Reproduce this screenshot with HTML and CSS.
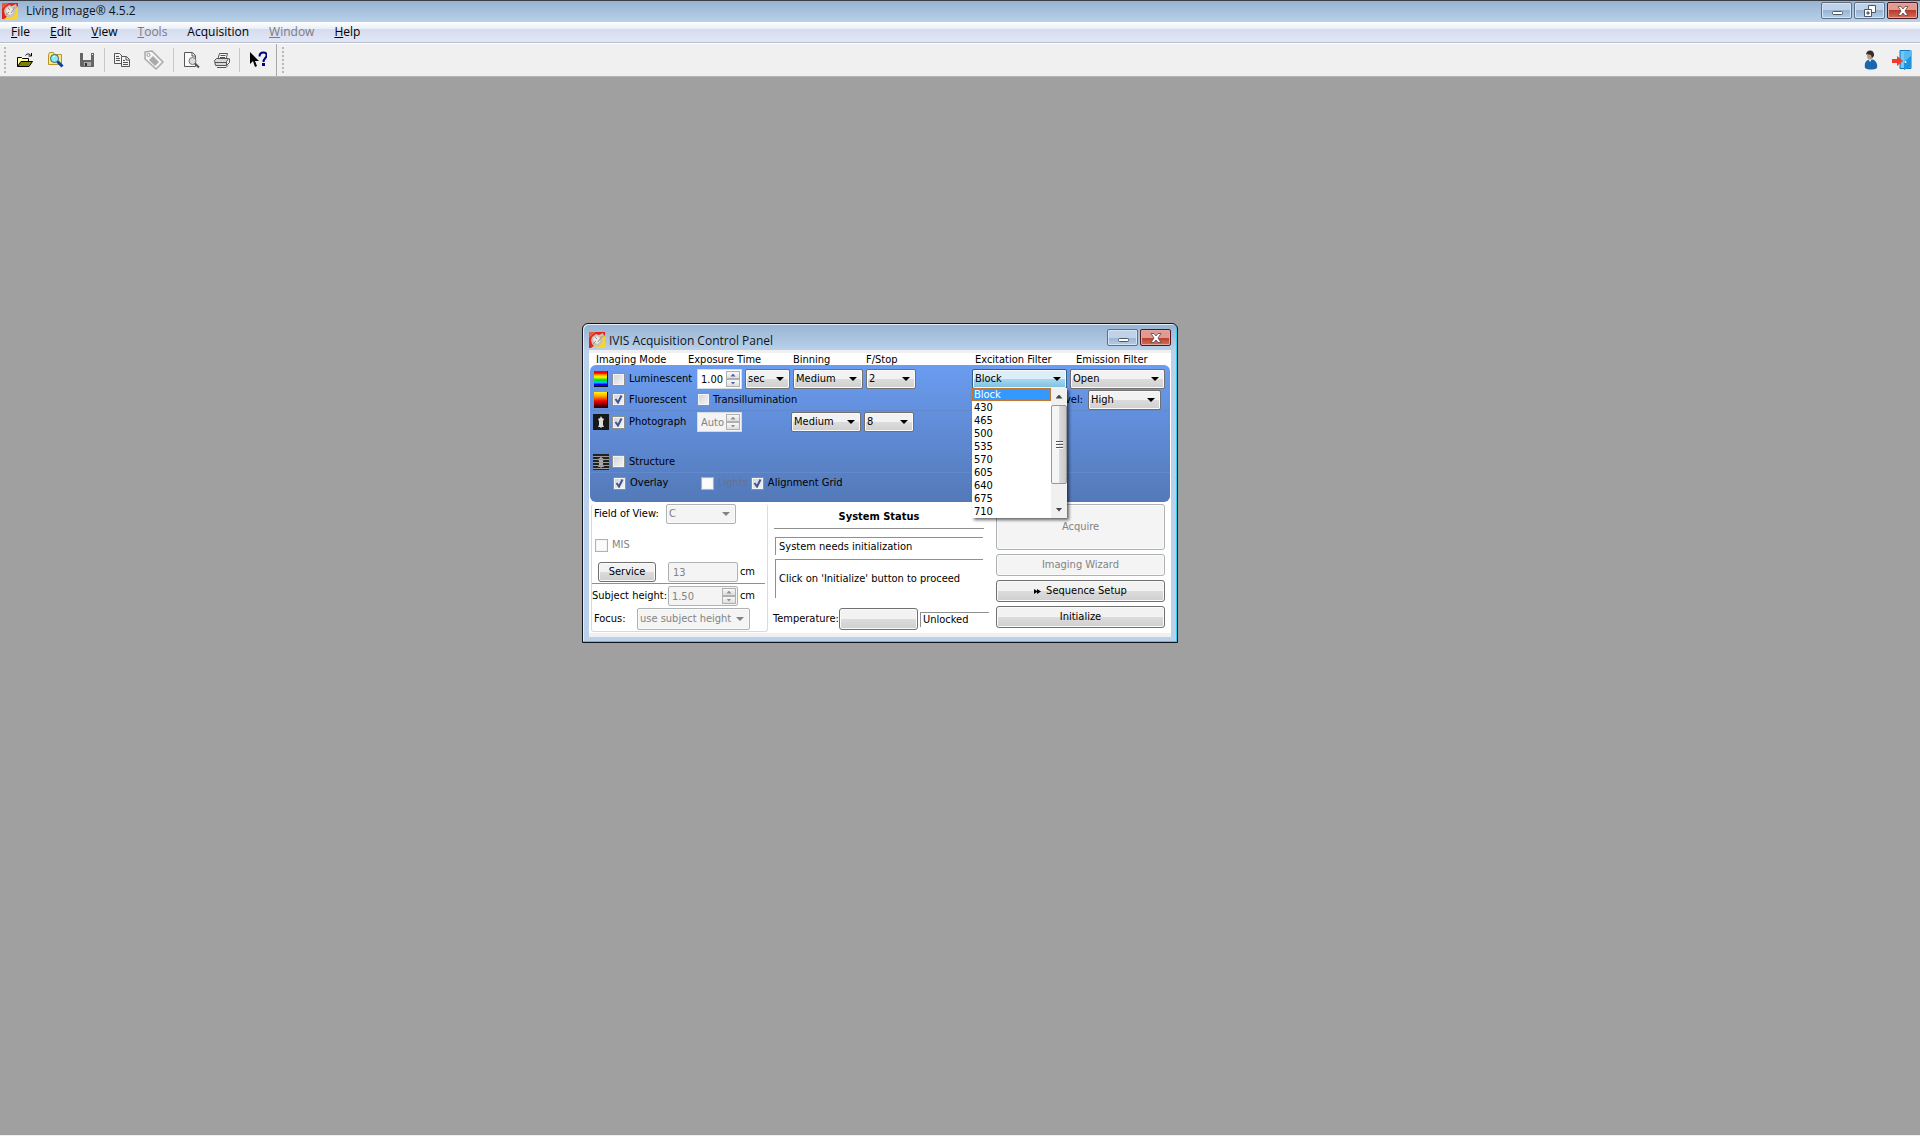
FILE: index.html
```
<!DOCTYPE html>
<html lang="en">
<head>
  <meta charset="UTF-8">
  <meta name="viewport" content="width=device-width, initial-scale=1">
  <title>Living Image® 4.5.2</title>
  <link rel="stylesheet" href="styles.css">
</head>
<body>
  <!-- shared logo -->
  <svg width="0" height="0" class="defs" aria-hidden="true">
    <symbol id="logo" viewBox="0 0 16 16">
      <rect width="16" height="16" fill="#e0241c"/>
      <path d="M16 3v13H2l8-6z" fill="#f7d52a"/>
      <path d="M0 0h7L0 6z" fill="#e85a3c"/>
      <path d="M2 8l1-3 4-3 3 1 4-2 1 3-2 3 1 3-4 4-4 1-3-3z" fill="#c9c2bb"/>
      <path d="M4 6l4-2 3 2v4l-3 2-3-2z" fill="#ebe8e3"/>
      <path d="M4 12l3-3M9 10l4-6M6 5l2 2" stroke="#9a8f88" fill="none"/>
    </symbol>
  </svg>

  <header class="titlebar">
    <svg class="logo"><use href="#logo"/></svg>
    <h1>Living Image® 4.5.2</h1>
    <div class="win-buttons">
      <button aria-label="Minimize"><svg width="12" height="12"><rect x="1.5" y="6.5" width="10" height="3" rx="1" fill="#fff" stroke="#4d5666"/></svg></button>
      <button aria-label="Restore"><svg width="12" height="12" fill="#fff" stroke="#4d5666"><path d="M4.500 .5h7v7h-7z"/><path d="M.5 4.500h7v7h-7z"/><path d="M3 7h2v2H3z" fill="#8fb0d4"/></svg></button>
      <button class="close" aria-label="Close"><svg width="12" height="12"><path d="M1 1.500h3l2 2.500 2-2.500h3L8 6l3 4.500H8L6 8l-2 2.500H1L4 6z" fill="#fff" stroke="#57444d" stroke-width=".8"/></svg></button>
    </div>
  </header>

  <nav class="menubar">
    <button><u>F</u>ile</button>
    <button><u>E</u>dit</button>
    <button><u>V</u>iew</button>
    <button disabled><u>T</u>ools</button>
    <button>Acquisition</button>
    <button disabled><u>W</u>indow</button>
    <button><u>H</u>elp</button>
  </nav>

  <div class="toolbar">
    <span class="grip"></span>
    <button aria-label="Open">
      <svg width="18" height="18" viewBox="0 0 18 18"><path d="M1.500 15.500v-9h4l1 1h6v3" fill="#ffff9c" stroke="#000"/><path d="M1.500 15.500l3.500-5h11.500l-3.500 5z" fill="#808000" stroke="#000"/><path d="M9.500 4.500c1-2 4-2 5.500 0M15.500 2v3h-3" fill="none" stroke="#000"/></svg>
    </button>
    <button aria-label="Browse">
      <svg width="18" height="18" viewBox="0 0 18 18"><path d="M1.500 13.500v-10l1-2h4l1 2h7v10z" fill="#ffe680" stroke="#b8962a"/><circle cx="7.500" cy="7.500" r="4" fill="#8ceaf5" stroke="#35607c"/><path d="M6 6l2-1" stroke="#fff"/><path d="M10.500 10.500l5 5" stroke="#0a3fb0" stroke-width="3"/></svg>
    </button>
    <button aria-label="Save">
      <svg width="18" height="18" viewBox="0 0 18 18"><path d="M2 2h14v14H3l-1-1z" fill="#666"/><path d="M5 2h8v7H5z" fill="#f0f0f0"/><path d="M6 11h7v4H6z" fill="#aaa"/><path d="M7 12h2v3H7z" fill="#333"/><path d="M14 3h1v1h-1z" fill="#eee"/></svg>
    </button>
    <i class="sep"></i>
    <button aria-label="Copy">
      <svg width="18" height="18" viewBox="0 0 18 18" fill="#f4f4f4" stroke="#555"><path d="M1.500 2.500h5l3 3v7h-8z"/><path d="M3 5.500h3M3 7.500h4M3 9.500h4"/><path d="M8.500 5.500h5l3 3v7h-8z"/><path d="M13 6v3h3M10 9.500h2M10 11.500h5M10 13.500h5"/></svg>
    </button>
    <button class="wide" aria-label="Label">
      <svg width="20" height="20" viewBox="0 0 20 20"><path d="M1 2l7-1 11 11-7 7L1 9z" fill="#f4f4f4" stroke="#aaa" stroke-width="1.500" stroke-linejoin="round"/><circle cx="4.500" cy="5" r="1.500" fill="#fff" stroke="#999"/><path d="M9 6l6 6-4 4-6-6z" fill="#aaa"/></svg>
    </button>
    <i class="sep"></i>
    <button aria-label="Print preview">
      <svg width="18" height="18" viewBox="0 0 18 18"><path d="M2.500 1.500h8l3 3v11h-11z" fill="#fafafa" stroke="#555"/><path d="M10 2v3h3" fill="none" stroke="#555"/><circle cx="10.500" cy="10" r="3.500" fill="#ddd" stroke="#777"/><path d="M13 12.500l4 4" stroke="#555" stroke-width="2"/></svg>
    </button>
    <button aria-label="Print">
      <svg width="18" height="18" viewBox="0 0 18 18" stroke="#555"><path d="M4.500 9.500l2-7h8l-2 7" fill="#fafafa"/><path d="M7.500 4.500h5M7 6.500h5"/><path d="M1.500 9.500l2-2h12l-2 3v4h-11z" fill="#d8d8d8"/><path d="M13.500 14.500l3-3v-4M2 11.500h11" fill="none"/><path d="M4 16.500h9l2-2" fill="none"/></svg>
    </button>
    <i class="sep"></i>
    <button class="wide" aria-label="What's this?">
      <svg width="18" height="18" viewBox="0 0 18 18"><path d="M1 1v12l3-3 2 6 2-1-2-5h4z" fill="#000"/><path d="M10.500 5.500c0-3 2-4 4-4s3.500 1 3 3.500-3 2.500-3 6" fill="none" stroke="#000080" stroke-width="2"/><path d="M13 12h3v3h-3z" fill="#000080"/></svg>
    </button>
    <i class="edge"></i>
    <span class="grip"></span>
    <div class="toolbar-right">
      <button aria-label="User">
        <svg width="16" height="20" viewBox="0 0 16 20"><path d="M2 18c-1-5 1-8 5-9 5 0 8 4 7 9-3 2-9 2-12 0z" fill="#1b66ac"/><path d="M5 9l2 3 2-3z" fill="#d8ecf8"/><ellipse cx="7" cy="5.500" rx="3" ry="4" fill="#b59a80"/><path d="M3 5c0-6 9-6 8 1l-2 2-1-3-4-1z" fill="#382d26"/></svg>
      </button>
      <button aria-label="Log out">
        <svg width="20" height="20" viewBox="0 0 20 20"><path d="M8 .5h11v18H8z" fill="#73c7f2" stroke="#1472b8"/><path d="M12 3l7-3v17l-7 3z" fill="#1f93dc"/><path d="M12 3l7-3v6l-7 6z" fill="#55baf0"/><circle cx="13.500" cy="12" r="1" fill="#fff"/><path d="M0 9h5V6l6 5-6 5v-3H0z" fill="#ef3b2d"/></svg>
      </button>
    </div>
  </div>

  <main class="desktop">
    <section class="window">
      <header class="window-title">
        <svg class="logo"><use href="#logo"/></svg>
        <h2>IVIS Acquisition Control Panel</h2>
        <div class="win-buttons">
          <button aria-label="Minimize"><svg width="12" height="12"><rect x="1.500" y="6.500" width="10" height="3" rx="1" fill="#fff" stroke="#4d5666"/></svg></button>
          <button class="close" aria-label="Close"><svg width="12" height="12"><path d="M1 1.500h3l2 2.500 2-2.500h3L8 6l3 4.500H8L6 8l-2 2.500H1L4 6z" fill="#fff" stroke="#57444d" stroke-width=".8"/></svg></button>
        </div>
      </header>

      <div class="client">
        <div class="row heads">
          <span>Imaging Mode</span>
          <span>Exposure Time</span>
          <span>Binning</span>
          <span>F/Stop</span>
          <span>Excitation Filter</span>
          <span>Emission Filter</span>
        </div>

        <div class="imaging">
          <div class="row">
            <div class="mode">
              <i class="mode-icon rainbow"></i>
              <label><input type="checkbox">Luminescent</label>
            </div>
            <div class="cell">
              <div class="spinner">
                <input type="text" value="1.00" aria-label="Exposure time">
                <div class="steps"><button aria-label="Up"></button><button aria-label="Down"></button></div>
              </div>
              <select class="unit" aria-label="Unit"><option>sec</option></select>
            </div>
            <select class="binning" aria-label="Binning"><option>Medium</option></select>
            <select class="fstop" aria-label="F/Stop"><option>2</option></select>
            <div class="combo">
              <select class="open" aria-label="Excitation filter"><option>Block</option></select>
              <div class="dropdown">
                <ul role="listbox">
                  <li role="option" aria-selected="true">Block</li>
                  <li role="option">430</li>
                  <li role="option">465</li>
                  <li role="option">500</li>
                  <li role="option">535</li>
                  <li role="option">570</li>
                  <li role="option">605</li>
                  <li role="option">640</li>
                  <li role="option">675</li>
                  <li role="option">710</li>
                </ul>
                <div class="scrollbar">
                  <button aria-label="Scroll up"></button>
                  <div class="thumb"><i></i></div>
                  <button aria-label="Scroll down"></button>
                </div>
              </div>
            </div>
            <select aria-label="Emission filter"><option>Open</option></select>
          </div>

          <div class="row lined">
            <div class="mode">
              <i class="mode-icon fire"></i>
              <label><input type="checkbox" checked>Fluorescent</label>
            </div>
            <label class="cell trans"><input type="checkbox">Transillumination</label>
            <div class="lamp">
              <label for="lamp">Lamp Level:</label>
              <select id="lamp"><option>High</option></select>
            </div>
          </div>

          <div class="row photo">
            <div class="mode">
              <svg class="mode-icon" viewBox="0 0 16 16"><rect width="16" height="16" fill="#181818"/><path d="M8 2l1 2 2 1-1 2v4l1 2H9l-1 1-1-1H5l1-2V7L5 5l2-1z" fill="#ddd"/></svg>
              <label><input type="checkbox" checked>Photograph</label>
            </div>
            <div class="cell">
              <div class="spinner">
                <input type="text" value="Auto" aria-label="Photograph exposure" disabled>
                <div class="steps"><button aria-label="Up" disabled></button><button aria-label="Down" disabled></button></div>
              </div>
            </div>
            <select class="binning" aria-label="Photograph binning"><option>Medium</option></select>
            <select class="fstop" aria-label="Photograph F/Stop"><option>8</option></select>
          </div>

          <div class="row lined structure">
            <div class="mode">
              <svg class="mode-icon" viewBox="0 0 16 16"><rect width="16" height="16" fill="#222"/><path d="M8 2l1 2 2 1-1 2v4l1 2H9l-1 1-1-1H5l1-2V7L5 5l2-1z" fill="#aaa"/><path d="M0 2.500h16M0 5.500h16M0 8.500h16M0 11.500h16M0 14.500h16" stroke="#999"/></svg>
              <label><input type="checkbox">Structure</label>
            </div>
          </div>

          <div class="row overlay">
            <div class="mode indent"><label><input type="checkbox" checked>Overlay</label></div>
            <div class="cell wide-cell">
              <label class="faded"><input type="checkbox" disabled>Lights</label>
              <label><input type="checkbox" checked>Alignment Grid</label>
            </div>
          </div>
        </div>

        <div class="lower">
          <div class="stage">
            <div class="field fov">
              <label for="fov">Field of View:</label>
              <select id="fov" disabled><option>C</option></select>
            </div>
            <label class="mis"><input type="checkbox" disabled>MIS</label>
            <div class="field service">
              <button class="btn">Service</button>
              <input type="text" class="box" value="13" aria-label="Field of view width" disabled>
              <span>cm</span>
            </div>
            <hr>
            <div class="field height">
              <label for="height">Subject height:</label>
              <div class="spinner box">
                <input type="text" id="height" value="1.50" disabled>
                <div class="steps"><button aria-label="Up" disabled></button><button aria-label="Down" disabled></button></div>
              </div>
              <span>cm</span>
            </div>
            <div class="field focus">
              <label for="focus">Focus:</label>
              <select id="focus" disabled><option>use subject height</option></select>
            </div>
          </div>

          <div class="status">
            <h3>System Status</h3>
            <p class="state">System needs initialization</p>
            <p class="hint">Click on 'Initialize' button to proceed</p>
            <div class="temperature">
              <span>Temperature:</span>
              <button class="btn" aria-label="Temperature"></button>
              <span class="lock">Unlocked</span>
            </div>
          </div>

          <div class="actions">
            <button class="btn acquire" disabled>Acquire</button>
            <button class="btn" disabled>Imaging Wizard</button>
            <button class="btn"><svg width="7" height="7" viewBox="0 0 7 7"><path d="M0 1l3 2V1l4 2.500L3 6V4L0 6z"/></svg>Sequence Setup</button>
            <button class="btn">Initialize</button>
          </div>
        </div>
      </div>
    </section>
  </main>
</body>
</html>
```
FILE: styles.css
```
* {
  box-sizing: border-box;
}
body {
  margin: 0;
  min-height: 100vh;
  display: flex;
  flex-direction: column;
  font-family: "Open Sans", "Noto Sans", sans-serif;
  font-size: 12px;
  color: #000;
  background: #f0f0f0;
}
button, input, select {
  font: inherit;
  color: inherit;
  margin: 0;
}
button {
  padding: 0;
  border: 0;
  background: none;
}
h1, h2 {
  margin: 0;
  font-size: 12px;
  font-weight: normal;
  color: #10151c;
}
.defs {
  position: absolute;
}
.logo {
  width: 16px;
  height: 16px;
  flex: none;
}

/* main window chrome */
.titlebar {
  display: flex;
  align-items: center;
  gap: 8px;
  height: 22px;
  padding: 0 2px 2px;
  border-top: 1px solid #3c3f46;
  background: linear-gradient(#98b3d2, #b9d1ea);
}
.win-buttons {
  display: flex;
  gap: 2px;
  margin-left: auto;
}
.win-buttons button {
  display: flex;
  align-items: center;
  justify-content: center;
  width: 31px;
  height: 17px;
  border: 1px solid #5c7188;
  border-radius: 2px;
  box-shadow: inset 0 0 0 1px #d5e3f2;
  background: linear-gradient(#bfd2e8 50%, #98b4d3 50%, #b5cde6);
}
.win-buttons .close {
  border-color: #4c1a24;
  box-shadow: inset 0 0 0 1px #e5a79c;
  background: linear-gradient(#e09b90 50%, #b93a29 50%, #d0705a);
}
.menubar {
  display: flex;
  align-items: center;
  gap: 20px;
  height: 21px;
  padding: 0 11px 2px;
  border-bottom: 1px solid #b6bccc;
  background: linear-gradient(#fff, #e9edf7 35%, #d5dcee 36%, #e2e7f6);
}
.menubar button:disabled {
  color: #7a7a80;
}
.toolbar {
  display: flex;
  align-items: center;
  height: 34px;
  padding: 0 3px 0 4px;
  border-top: 1px solid #fff;
  border-bottom: 1px solid #b4b4b4;
  background: #f0f0f0;
}
.toolbar button {
  display: flex;
  align-items: center;
  justify-content: center;
  width: 31px;
  height: 28px;
}
.toolbar .wide {
  width: 34px;
}
.grip {
  width: 2px;
  height: 26px;
  margin-right: 3px;
  background: repeating-linear-gradient(#b8b8b8 0 2px, transparent 2px 4px);
}
.sep {
  width: 1px;
  height: 24px;
  margin: 0 1px 0 2px;
  background: #c8c8c8;
}
.edge {
  width: 1px;
  align-self: stretch;
  margin: 0 5px 0 1px;
  background: #a8a8a8;
}
.toolbar-right {
  display: flex;
  margin-left: auto;
}
.desktop {
  position: relative;
  flex: 1;
  margin-bottom: 1px;
  background: #a0a0a0;
}

/* acquisition window */
.window {
  position: absolute;
  left: 582px;
  top: 246px;
  width: 596px;
  padding: 0 6px 5px;
  border: 1px solid #10151c;
  border-radius: 6px 6px 0 0;
  box-shadow: inset -1px -1px #2ed0f0, inset 1px 1px #e4eef8;
  background: linear-gradient(#98b3d2, #b9d1ea 26px);
}
.window-title {
  display: flex;
  align-items: center;
  gap: 4px;
  height: 26px;
  padding-top: 6px;
}
.window-title .win-buttons {
  align-self: flex-start;
  margin-top: -1px;
}
.client {
  font-family: "DejaVu Sans Condensed", "DejaVu Sans", sans-serif;
  font-size: 11px;
  font-stretch: condensed;
  line-height: 14px;
  padding: 0 1px;
  border-top: 3px solid #f0f0f0;
  border-bottom: 4px solid #f0f0f0;
  background: #fff;
}
.row {
  display: grid;
  grid-template-columns: 104px 96px 73px 1fr 98px 95px;
  align-items: center;
  height: 20px;
  padding: 0 5px 0 3px;
}
.heads {
  height: 12px;
}
.heads span {
  white-space: nowrap;
}
.heads span:nth-child(1),
.heads span:nth-child(5) {
  padding-left: 3px;
}
.heads span:nth-child(2) {
  margin-left: -9px;
}
.heads span:nth-child(6) {
  padding-left: 6px;
}
.imaging {
  height: 137px;
  padding-top: 4px;
  border-radius: 6px;
  background: linear-gradient(#6b9cf0, #5379b8);
}
.lined {
  height: 22px;
  border-bottom: 1px solid #6289cb;
}
.photo {
  margin-top: 1px;
}
.photo .binning, .photo .fstop {
  margin-left: -2px;
}
.structure {
  margin-top: 19px;
}
.mode, .cell, .field, label {
  display: flex;
  align-items: center;
}
.mode {
  gap: 3px;
}
.indent {
  padding-left: 20px;
}
.mode-icon {
  width: 16px;
  height: 16px;
  flex: none;
}
.rainbow, .fire {
  width: 14px;
  margin: 0 1px;
  border: solid #111;
  border-width: 0 1px 1px 0;
}
.rainbow {
  background: linear-gradient(#f00 15%, #f90 25%, #ff0 40%, #0d0 60%, #0cf 75%, #00f 90%);
}
.fire {
  background: linear-gradient(#ff0, #f90 30%, #e00 60%, #300);
}
label {
  gap: 4px;
  white-space: nowrap;
}
input[type="checkbox"] {
  appearance: none;
  width: 13px;
  height: 13px;
  flex: none;
  border: 1px solid #8e8f8f;
  box-shadow: inset 0 0 0 1px #f4f4f4;
  background: linear-gradient(135deg, #cfd3d8, #f6f6f6);
}
input[type="checkbox"]:checked {
  background: url("data:image/svg+xml,%3Csvg xmlns='http://www.w3.org/2000/svg' width='11' height='11'%3E%3Cpath d='M2.500 5l2.500 3.500L8.500 1.500' fill='none' stroke='%233f5591' stroke-width='2'/%3E%3C/svg%3E"), linear-gradient(135deg, #cfd3d8, #f6f6f6);
}
input[type="checkbox"]:disabled {
  border-color: #b1b1b1;
  background: #fbfbfb;
}
.trans {
  gap: 5px;
}
.wide-cell {
  grid-column: 2 / 5;
  gap: 12px;
  padding-left: 4px;
}
.faded {
  color: #66738f;
}

/* controls */
select {
  appearance: none;
  height: 20px;
  padding: 0 14px 0 2px;
  border: 1px solid #707070;
  border-radius: 2px;
  box-shadow: inset 0 0 0 1px #fafafa;
  background: url("data:image/svg+xml,%3Csvg xmlns='http://www.w3.org/2000/svg' width='8' height='4'%3E%3Cpath d='M0 0h8L4 4z'/%3E%3C/svg%3E") no-repeat right 5px center, linear-gradient(#f2f2f2 50%, #dcdcdc 50%, #cfcfcf);
}
select:disabled {
  color: #838383;
  opacity: 1;
  border-color: #adb2b5;
  background: url("data:image/svg+xml,%3Csvg xmlns='http://www.w3.org/2000/svg' width='8' height='4'%3E%3Cpath fill='%23838383' d='M0 0h8L4 4z'/%3E%3C/svg%3E") no-repeat right 5px center, #f4f4f4;
}
.unit {
  width: 45px;
}
.binning {
  width: 70px;
}
.fstop {
  width: 50px;
}
.cell {
  gap: 3px;
}
.spinner {
  display: flex;
  width: 45px;
  height: 20px;
  padding: 1px;
  border: 1px solid #d5dbe5;
  background: #fff;
}
.spinner input {
  flex: 1;
  min-width: 0;
  padding: 2px 0 0 2px;
  border: 0;
  background: none;
}
.spinner:has(input:disabled) {
  background: #f4f4f4;
}
input:disabled {
  color: #838383;
}
.steps {
  display: flex;
  flex-direction: column;
  width: 14px;
}
.steps button {
  flex: 1;
  border: 1px solid #b0b0b0;
  background: linear-gradient(#f8f8f8, #dedede);
  display: flex;
  align-items: center;
  justify-content: center;
}
.steps button::after {
  content: "";
  width: 5px;
  height: 3px;
  background: #4d64a8;
  clip-path: polygon(0 100%, 50% 0, 100% 100%);
}
.steps button:last-child::after {
  clip-path: polygon(0 0, 50% 100%, 100% 0);
}
.steps button:disabled::after {
  background: #909090;
}
.btn {
  display: flex;
  align-items: center;
  justify-content: center;
  gap: 5px;
  height: 22px;
  border: 1px solid #707070;
  border-radius: 3px;
  box-shadow: inset 0 0 0 1px #fafafa;
  background: linear-gradient(#f2f2f2 50%, #dcdcdc 50%, #cfcfcf);
}
.btn:disabled {
  color: #838383;
  border-color: #adb2b5;
  background: #f4f4f4;
}
.lamp {
  grid-column: 4 / 7;
  justify-self: end;
  display: flex;
  align-items: center;
  gap: 5px;
  padding-right: 4px;
}
.lamp select {
  width: 73px;
}

/* open filter list */
.combo {
  position: relative;
  width: 95px;
}
.combo select {
  width: 100%;
}
.combo .open {
  border-color: #2c628b;
  background: url("data:image/svg+xml,%3Csvg xmlns='http://www.w3.org/2000/svg' width='8' height='4'%3E%3Cpath d='M0 0h8L4 4z'/%3E%3C/svg%3E") no-repeat right 5px center, linear-gradient(#dceef8 50%, #a8d8f0 50%, #7cbfe2);
}
.dropdown {
  position: absolute;
  z-index: 1;
  left: 0;
  top: 19px;
  width: 95px;
  display: flex;
  background: #fff;
  box-shadow: 2px 2px 3px rgba(0,0,0,0.6);
}
.dropdown ul {
  flex: 1;
  margin: 0;
  padding: 0;
  list-style: none;
}
.dropdown li {
  height: 13px;
  padding-left: 2px;
  line-height: 13px;
}
.dropdown li[aria-selected="true"] {
  color: #fff;
  background: #3399ff;
  outline: 1px dotted #c8772c;
  outline-offset: -1px;
}
.scrollbar {
  display: flex;
  flex-direction: column;
  width: 16px;
  background: #f0f0f0;
}
.scrollbar button {
  height: 17px;
  display: flex;
  align-items: center;
  justify-content: center;
}
.scrollbar button::after {
  content: "";
  width: 7px;
  height: 4px;
  background: #444;
  clip-path: polygon(0 100%, 50% 0, 100% 100%);
}
.scrollbar button:last-child {
  margin-top: auto;
}
.scrollbar button:last-child::after {
  clip-path: polygon(0 0, 50% 100%, 100% 0);
}
.thumb {
  display: flex;
  align-items: center;
  justify-content: center;
  height: 79px;
  border: 1px solid #979797;
  border-radius: 2px;
  background: linear-gradient(90deg, #f5f5f5 50%, #dcdcdc 50%, #c8c8c8);
}
.thumb i {
  width: 7px;
  height: 8px;
  background: repeating-linear-gradient(#555 0 1px, #fff 1px 2px, transparent 2px 3px);
}

/* lower half */
.lower {
  display: grid;
  grid-template-columns: 177px 1fr 169px;
  height: 131px;
  padding: 2px 5px 1px 1px;
}
.stage {
  border: 1px solid #d0dce8;
  border-top: 0;
  border-radius: 3px;
}
.field {
  height: 20px;
  padding-left: 2px;
}
.stage hr {
  margin: 1px 2px 2px 0;
  border: 0;
  border-top: 1px solid #909090;
}
.stage span {
  margin-left: 2px;
}
.fov select {
  width: 70px;
  margin-left: auto;
}
.fov {
  padding-right: 31px;
}
.mis {
  height: 20px;
  margin: 11px 0 7px;
  padding-left: 3px;
  color: #838383;
}
.service .btn {
  width: 58px;
  height: 20px;
  margin-left: 4px;
}
.box {
  width: 70px;
  height: 20px;
  margin-left: auto;
  border: 1px solid #adb2b5;
  border-radius: 2px;
  background: #f4f4f4;
}
input.box {
  padding: 0 4px;
}
.service, .height {
  padding-right: 12px;
}
.height {
  padding-left: 0;
}
.height label {
  margin-right: -4px;
}
.focus {
  height: 22px;
  margin-top: 2px;
  padding-right: 17px;
}
.focus select {
  width: 113px;
  height: 22px;
  margin-left: auto;
}
.status {
  padding: 0 7px 0 5px;
}
.status h3 {
  margin: 0 5px 8px 1px;
  padding: 6px 0 4px;
  border-bottom: 1px solid #909090;
  font-size: 11px;
  text-align: center;
}
.status p {
  display: flex;
  align-items: center;
  margin: 0 6px 4px 2px;
  padding-left: 3px;
  border: solid #909090;
  border-width: 1px 0 0 1px;
}
.state {
  height: 18px;
}
.hint {
  height: 39px;
}
.temperature {
  display: flex;
  align-items: center;
  margin-top: 10px;
}
.temperature .btn {
  width: 79px;
  margin-left: auto;
}
.lock {
  width: 69px;
  margin-left: 2px;
  padding-left: 2px;
  border: solid #909090;
  border-width: 1px 0 0 1px;
}
.actions {
  display: flex;
  flex-direction: column;
  gap: 4px;
}
.actions .acquire {
  height: 46px;
}
```
